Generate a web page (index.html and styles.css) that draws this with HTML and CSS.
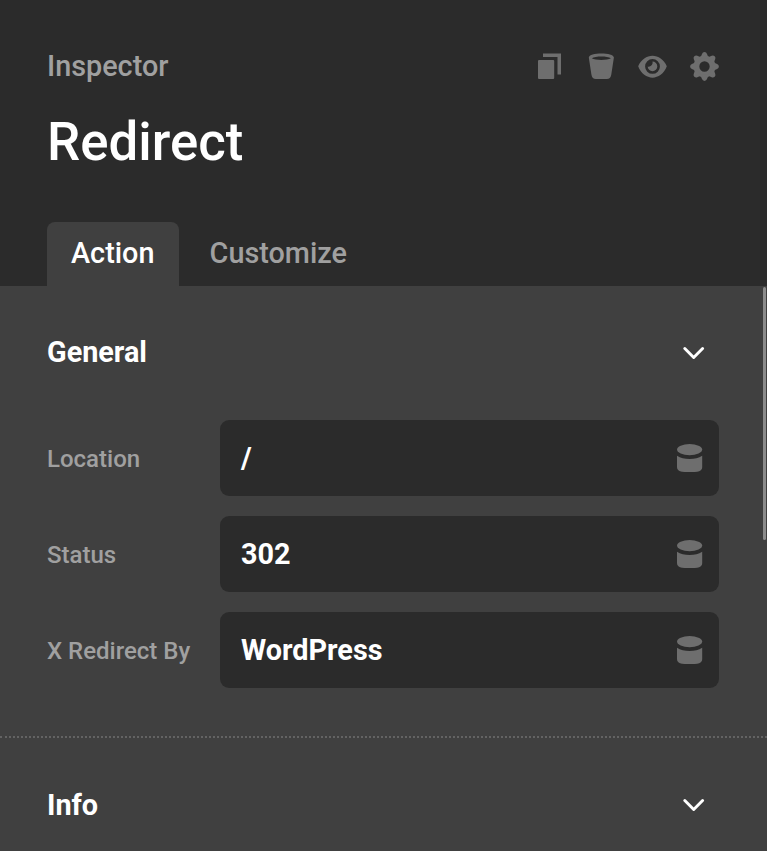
FILE: index.html
```html
<!DOCTYPE html>
<html lang="en">

<head>
    <meta charset="UTF-8">
    <meta name="viewport" content="width=device-width, initial-scale=1.0">
    <title>Inspector</title>
    <link rel="stylesheet" href="styles.css">
</head>

<body>

    <svg class="symbols">
        <symbol id="database" viewBox="0.300 0 26 28">
            <ellipse cx="12.9" cy="5.6" rx="12.6" ry="5.6" />
            <path d="M.3 11.8Q5.500 15 12.900 15t12.600-3.200V23q0 3-3 4.300Q20.800 28 17.800 28H8Q5 28 3.300 27.300.3 26 .3 23z" />
        </symbol>
        <symbol id="chevron" viewBox="0 0 22 14">
            <path d="M1.800 2.500l8.900 9 8.900-9" fill="none" stroke="#fff" stroke-width="2.900" stroke-linecap="round" stroke-linejoin="round" />
        </symbol>
    </svg>

    <div class="inspector">
        <header class="header">
            <div class="toolbar">
                <span class="label">Inspector</span>
                <div class="actions">
                    <svg class="icon" viewBox="-2 0 30 30">
                        <path d="M8 1.500h18v21h-3.500V5H8z" />
                        <rect x="3" y="8" width="16.200" height="19" rx="1" />
                    </svg>
                    <svg class="icon" viewBox="-1.300 0 30 30">
                        <path fill-rule="evenodd" d="M2.500 5.500C2.500 0 27.600 0 27.600 5.500L25 22.500q-.7 4.500-4.500 4.500H9.600Q5.800 27 5.100 22.500zM5.500 6.300C9 8.600 21 8.600 24.600 6.300 21 4 9 4 5.500 6.300z" />
                    </svg>
                    <svg class="icon" viewBox="-.5 .2 30 30">
                        <path fill-rule="evenodd" d="M.7 14.500C6.500 .4 23.500 .4 29.300 14.500 23.500 29.600 6.500 29.600 .7 14.500zM15 7.200a7.400 7.400 0 1 0 0 14.800 7.400 7.400 0 0 0 0-14.800z" />
                        <path d="M15 9.800a4.800 4.800 0 1 1-4.800 4.800c1.700 1 5.600-.8 4.800-4.800z" />
                    </svg>
                    <svg class="icon" viewBox="-15.500 -14.500 30 30">
                        <circle r="8" fill="none" stroke="#6e6e6e" stroke-width="5.600" />
                        <g id="teeth">
                            <path id="spike" d="M-5.200-8.200Q-3-10.400-2.500-12.600-1.900-14.400 0-14.400T2.500-12.600Q3-10.400 5.200-8.200z" />
                            <use href="#spike" transform="rotate(90)" />
                            <use href="#spike" transform="rotate(180)" />
                            <use href="#spike" transform="rotate(270)" />
                        </g>
                        <use href="#teeth" transform="rotate(45)" />
                    </svg>
                </div>
            </div>
            <h1 class="title">Redirect</h1>
            <nav class="tabs">
                <div class="tab active">Action</div>
                <div class="tab">Customize</div>
            </nav>
        </header>

        <main class="content">
            <section class="section">
                <div class="section-head">
                    <h2>General</h2>
                    <svg class="chevron"><use href="#chevron" /></svg>
                </div>
                <div class="fields">
                    <div class="row">
                        <span class="row-label">Location</span>
                        <div class="field">/<svg class="database"><use href="#database" /></svg></div>
                    </div>
                    <div class="row">
                        <span class="row-label">Status</span>
                        <div class="field">302<svg class="database"><use href="#database" /></svg></div>
                    </div>
                    <div class="row">
                        <span class="row-label">X Redirect By</span>
                        <div class="field">WordPress<svg class="database"><use href="#database" /></svg></div>
                    </div>
                </div>
            </section>
            <section class="section">
                <div class="section-head">
                    <h2>Info</h2>
                    <svg class="chevron"><use href="#chevron" /></svg>
                </div>
            </section>
            <div class="scrollbar"></div>
        </main>
    </div>

</body>

</html>
```

FILE: styles.css
```css
* {
    box-sizing: border-box;
}

body {
    margin: 0;
    font-family: Roboto, sans-serif;
    font-weight: 500;
    background: #404040;
    color: #fff;
    overflow: hidden;
}

.symbols {
    display: none;
}

.inspector {
    display: flex;
    flex-direction: column;
    height: 100vh;
}

.header {
    height: 286px;
    padding: 46px 48px 0 47px;
    background: #2b2b2b;
}

.toolbar {
    display: flex;
    justify-content: space-between;
    align-items: center;
    height: 40px;
}

.label {
    font-size: 28.8px;
    color: #a0a0a0;
}

.actions {
    display: flex;
    gap: 22px;
    margin-top: 2px;
}

.icon {
    width: 30px;
    height: 30px;
    fill: #6e6e6e;
}

.title {
    margin: 21px 0 45px;
    font-size: 52.8px;
    font-weight: 500;
    line-height: 70px;
}

.tabs {
    display: flex;
    gap: 6.6px;
}

.tab {
    height: 64px;
    padding: 0 24px;
    border-radius: 8px 8px 0 0;
    font-size: 28.8px;
    line-height: 62px;
    color: #a0a0a0;
}

.tab.active {
    width: 132px;
    background: #404040;
    color: #fff;
}

.content {
    flex: 1;
    position: relative;
    min-height: 0;
}

.section {
    border-bottom: 2px dotted #636363;
}

.section-head {
    display: flex;
    justify-content: space-between;
    align-items: center;
    height: 134px;
    padding: 0 62px 0 47px;
}

.section-head h2 {
    margin: 0;
    font-size: 28.8px;
    font-weight: 700;
    line-height: 32px;
}

.section:first-child h2 {
    margin-bottom: 2px;
}

.chevron {
    width: 22px;
    height: 14px;
}

.fields {
    display: flex;
    flex-direction: column;
    gap: 20px;
    padding: 0 48px 48px 47px;
}

.row {
    display: flex;
    align-items: center;
}

.row-label {
    width: 173px;
    padding-top: 2px;
    font-size: 24px;
    color: #a0a0a0;
}

.field {
    display: flex;
    flex: 1;
    justify-content: space-between;
    align-items: center;
    height: 76px;
    padding: 0 16px 0 21px;
    border-radius: 9px;
    background: #2b2b2b;
    font-size: 28.8px;
    font-weight: 700;
}

.database {
    width: 26px;
    height: 28px;
    fill: #6e6e6e;
    overflow: visible;
}

.database use {
    overflow: visible;
}

.scrollbar {
    position: absolute;
    top: 1px;
    right: 1px;
    width: 3px;
    height: 253px;
    border-radius: 2px;
    background: #8c8c8c;
}
```
